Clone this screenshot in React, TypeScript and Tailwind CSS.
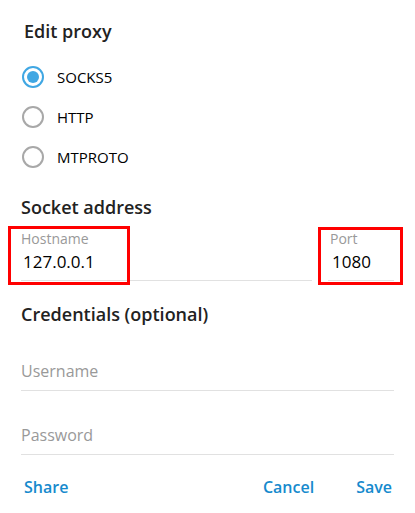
import React, { useState } from 'react';

const types = ['SOCKS5', 'HTTP', 'MTPROTO'];

const Radio: React.FC<{ checked: boolean }> = ({ checked }) => (
  <span
    className={`flex h-[22px] w-[22px] items-center justify-center rounded-full border-2 ${
      checked ? 'border-[#40a7e3]' : 'border-[#a8a8a8]'
    }`}
  >
    {checked && <span className="h-[12px] w-[12px] rounded-full bg-[#40a7e3]" />}
  </span>
);

const App: React.FC = () => {
  const [type, setType] = useState('SOCKS5');

  return (
    <div
      className="h-[513px] w-[415px] bg-white text-[#000]"
      style={{ fontFamily: '"Open Sans", "Noto Sans", sans-serif' }}
    >
      <div className="px-[24px] pt-[18px]">
        <h1 className="text-[18px] font-semibold leading-[26px] text-[#222]">Edit proxy</h1>
      </div>

      <div className="mt-[22px] flex flex-col gap-[18px] pl-[22px]">
        {types.map((t) => (
          <button key={t} onClick={() => setType(t)} className="flex h-[22px] items-center gap-[13px] text-left">
            <Radio checked={type === t} />
            <span className="text-[15px] leading-[22px]">{t}</span>
          </button>
        ))}
      </div>

      <div className="mt-[26px] px-[21px]">
        <h2 className="text-[18px] font-semibold leading-[26px] text-[#222]">Socket address</h2>
      </div>

      {/* host / port, with the red highlight boxes drawn over them */}
      <div className="relative mt-[10px] flex gap-[16px] px-[21px]">
        <div className="flex-1 border-b border-[#e1e1e1] pb-[8px]">
          <div className="text-[14px] leading-[18px] text-[#999]">Hostname</div>
          <div className="mt-[4px] pl-[2px] text-[17px] leading-[20px]">127.0.0.1</div>
        </div>
        <div className="w-[66px] border-b border-[#e1e1e1] pb-[8px]">
          <div className="pl-[2px] text-[14px] leading-[18px] text-[#999]">Port</div>
          <div className="mt-[4px] pl-[4px] text-[17px] leading-[20px]">1080</div>
        </div>
        <div className="absolute left-[8px] top-[-4px] h-[59px] w-[122px] border-[3px] border-[#ff0000]" />
        <div className="absolute left-[318px] top-[-3px] h-[58px] w-[85px] border-[3px] border-[#ff0000]" />
      </div>

      <div className="mt-[20px] px-[21px]">
        <h2 className="text-[18px] font-semibold leading-[26px] text-[#222]">Credentials (optional)</h2>
      </div>

      <div className="mt-[33px] px-[21px]">
        <div className="border-b border-[#e1e1e1] pb-[8px] text-[16px] leading-[22px] text-[#999]">Username</div>
        <div className="mt-[33px] border-b border-[#e1e1e1] pb-[8px] text-[16px] leading-[22px] text-[#999]">Password</div>
      </div>

      <div className="mt-[21px] flex items-center px-[23px] text-[16px] font-semibold leading-[22px] text-[#168acd]">
        <button className="ml-[1px]">Share</button>
        <div className="flex-1" />
        <button className="mr-[42px]">Cancel</button>
        <button>Save</button>
      </div>
    </div>
  );
};

export default App;
